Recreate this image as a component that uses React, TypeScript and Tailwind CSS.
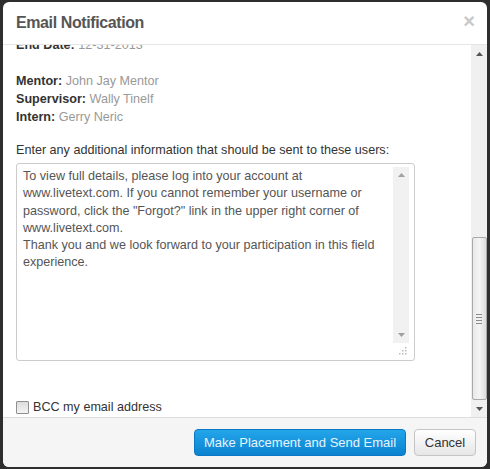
import React from 'react';

const textLines = [
  'To view full details, please log into your account at',
  'www.livetext.com. If you cannot remember your username or',
  'password, click the "Forgot?" link in the upper right corner of',
  'www.livetext.com.',
  'Thank you and we look forward to your participation in this field',
  'experience.',
];

function Arrow({ up, color = '#555' }: { up?: boolean; color?: string }) {
  return (
    <svg width="7" height="4" viewBox="0 0 7 4">
      {up ? <path d="M0 4 L3.5 0 L7 4 Z" fill={color} /> : <path d="M0 0 L3.5 4 L7 0 Z" fill={color} />}
    </svg>
  );
}

function Info({ label, value }: { label: string; value: string }) {
  return (
    <div className="h-[18px] leading-[18px]">
      <span className="font-bold text-[#333]">{label}</span>{' '}
      <span className="text-[#999]">{value}</span>
    </div>
  );
}

export default function App() {
  return (
    <div
      className="w-[490px] h-[469px] bg-[#2e2e2e] pt-[2px] px-[3px] pb-[2px] text-[12.6px]"
      style={{ fontFamily: '"Liberation Sans", Arial, sans-serif' }}
    >
      <div className="h-full bg-white rounded-[6px] flex flex-col overflow-hidden">
        {/* Header */}
        <div className="h-[43px] shrink-0 border-b border-[#e5e5e5] flex items-center justify-between pl-[13px] pr-[12px]">
          <h3 className="text-[16px] font-bold text-[#555] tracking-[-0.4px]">Email Notification</h3>
          <span className="text-[20px] font-bold text-[#c8c8c8] leading-none -mt-[4px]">×</span>
        </div>

        {/* Body, scrolled down a little */}
        <div className="flex-1 flex min-h-0">
          <div className="flex-1 overflow-hidden pl-[13px]">
            <div className="-mt-[9px]">
              <Info label="End Date:" value="12-31-2013" />
              <div className="h-[18px]" />
              <Info label="Mentor:" value="John Jay Mentor" />
              <Info label="Supervisor:" value="Wally Tinelf" />
              <Info label="Intern:" value="Gerry Neric" />

              <div className="mt-[15px] h-[18px] leading-[18px] text-[#333]">
                Enter any additional information that should be sent to these users:
              </div>

              <div className="mt-[4px] w-[399px] h-[198px] border border-[#cccccc] rounded-[3px] flex">
                <div className="flex-1 pl-[6px] pt-[4px] text-[#555] leading-[17.3px]">
                  {textLines.map((l, i) => (
                    <div key={i}>{l}</div>
                  ))}
                </div>
                <div className="w-[21px] flex flex-col items-start pt-[3px]">
                  <div className="w-[16px] h-[176px] bg-[#f1f1f1] flex flex-col items-center justify-between py-[6px]">
                    <Arrow up color="#a0a0a0" />
                    <Arrow color="#a0a0a0" />
                  </div>
                  <div className="w-[16px] h-[14px] flex items-end justify-end pr-[2px] pb-[2px]">
                    <svg width="9" height="9" viewBox="0 0 9 9">
                      <rect x="7" y="1" width="1.5" height="1.5" fill="#bbb" />
                      <rect x="4" y="4" width="1.5" height="1.5" fill="#bbb" />
                      <rect x="7" y="4" width="1.5" height="1.5" fill="#bbb" />
                      <rect x="1" y="7" width="1.5" height="1.5" fill="#bbb" />
                      <rect x="4" y="7" width="1.5" height="1.5" fill="#bbb" />
                      <rect x="7" y="7" width="1.5" height="1.5" fill="#bbb" />
                    </svg>
                  </div>
                </div>
              </div>

              <label className="mt-[38px] flex items-center gap-[4px] text-[#333] h-[16px]">
                <span className="w-[13px] h-[13px] border border-[#8f8f8f] bg-gradient-to-b from-[#dcdcdc] to-[#f4f4f4] rounded-[1px]" />
                <span>BCC my email address</span>
              </label>
            </div>
          </div>

          {/* Scrollbar */}
          <div className="w-[16px] bg-[#f0f0f0] flex flex-col items-center">
            <div className="h-[17px] flex items-center justify-center">
              <Arrow up />
            </div>
            <div className="h-[175px]" />
            <div className="w-[15px] h-[163px] border border-[#a9a9a9] rounded-[2px] bg-gradient-to-r from-[#e8e8e8] via-[#f4f4f4] to-[#dcdcdc] flex flex-col items-center justify-center gap-[2px]">
              <div className="w-[6px] h-[1px] bg-[#8a8a8a]" />
              <div className="w-[6px] h-[1px] bg-[#8a8a8a]" />
              <div className="w-[6px] h-[1px] bg-[#8a8a8a]" />
              <div className="w-[6px] h-[1px] bg-[#8a8a8a]" />
            </div>
            <div className="flex-1 flex items-center justify-center">
              <Arrow />
            </div>
          </div>
        </div>

        {/* Footer */}
        <div className="h-[50px] shrink-0 bg-[#f5f5f5] border-t border-[#dddddd] flex items-center justify-end gap-[8px] pr-[11px]">
          <button className="h-[27px] w-[212px] rounded-[4px] border border-[#0a78c2] bg-gradient-to-b from-[#23a6ea] to-[#0b82cf] text-[#e6f4ff] text-[13px]">
            Make Placement and Send Email
          </button>
          <button className="h-[27px] w-[62px] rounded-[4px] border border-[#c5c5c5] bg-gradient-to-b from-[#ffffff] to-[#e6e6e6] text-[#333] text-[13px]">
            Cancel
          </button>
        </div>
      </div>
    </div>
  );
}
